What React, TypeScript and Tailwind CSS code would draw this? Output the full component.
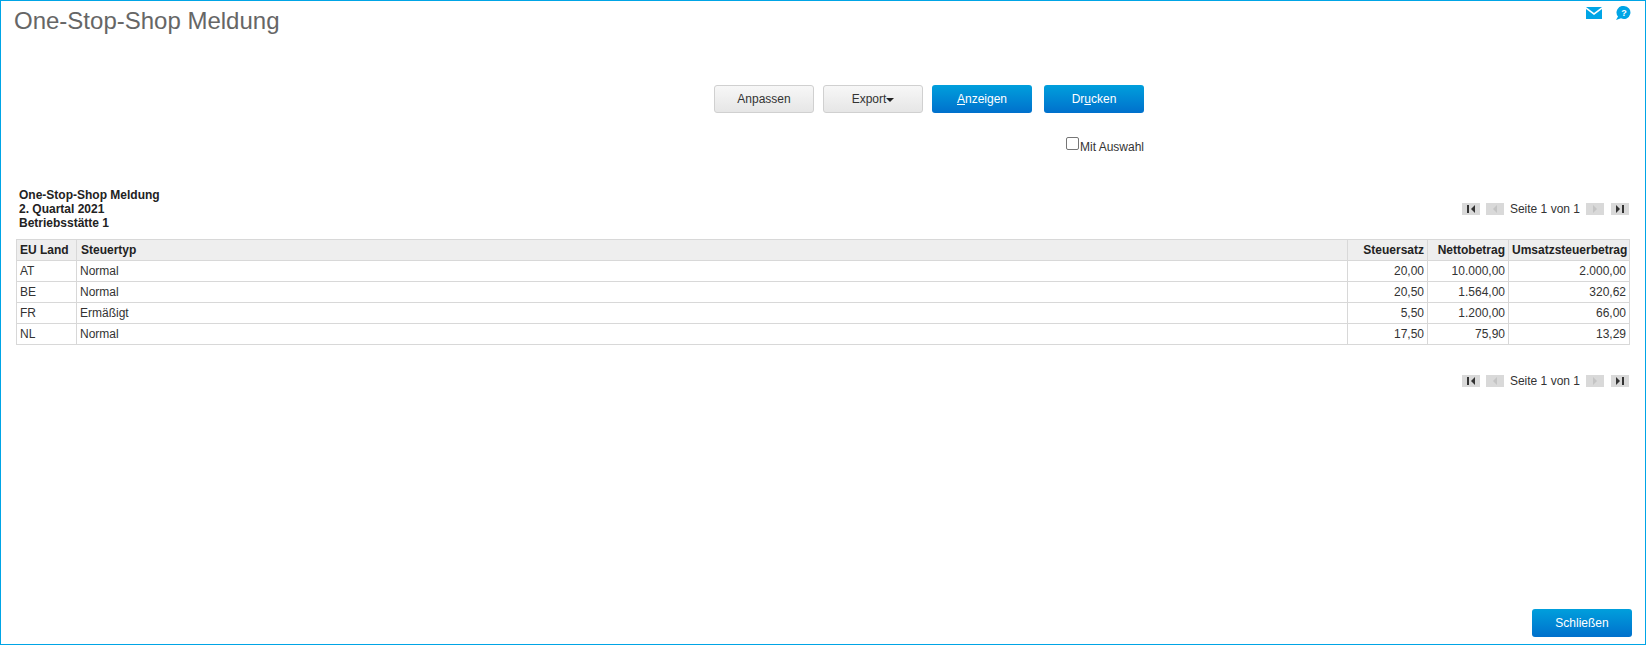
// One-Stop-Shop Meldung report page
const rows = [
  { land: 'AT', typ: 'Normal', satz: '20,00', netto: '10.000,00', ust: '2.000,00' },
  { land: 'BE', typ: 'Normal', satz: '20,50', netto: '1.564,00', ust: '320,62' },
  { land: 'FR', typ: 'Ermäßigt', satz: '5,50', netto: '1.200,00', ust: '66,00' },
  { land: 'NL', typ: 'Normal', satz: '17,50', netto: '75,90', ust: '13,29' },
];

function PagerButton({ kind }: { kind: 'first' | 'prev' | 'next' | 'last' }) {
  const off = kind === 'prev' || kind === 'next';
  const color = off ? '#c4c4c4' : '#333333';
  return (
    <span className="flex h-3 w-[18px] items-center justify-center bg-[#d9d9d9]">
      <svg width="10" height="8" viewBox="0 0 10 8">
        {kind === 'first' && <path d="M1 0h2v8H1zM9 0v8L5 4z" fill={color} />}
        {kind === 'prev' && <path d="M7 0v8L3 4z" fill={color} />}
        {kind === 'next' && <path d="M3 0v8l4-4z" fill={color} />}
        {kind === 'last' && <path d="M1 0v8l4-4zM7 0h2v8H7z" fill={color} />}
      </svg>
    </span>
  );
}

function Pager() {
  return (
    <div className="flex items-center text-xs text-[#333]">
      <PagerButton kind="first" />
      <span className="ml-1.5" />
      <PagerButton kind="prev" />
      <span className="mx-1.5 whitespace-nowrap">Seite 1 von 1</span>
      <PagerButton kind="next" />
      <span className="ml-[7px]" />
      <PagerButton kind="last" />
    </div>
  );
}

const grayBtn =
  'h-7 w-[100px] rounded-[3px] border border-[#d0d0d0] bg-gradient-to-b from-[#f7f7f7] to-[#e6e6e6] text-xs text-[#333]';
const blueBtn =
  'h-7 w-[100px] rounded-[3px] bg-gradient-to-b from-[#009fdc] to-[#0070cc] text-xs text-white';

export default function App() {
  return (
    <div className="relative flex h-[645px] w-[1646px] flex-col border border-[#00a5e6] bg-white font-['Liberation_Sans',Arial,sans-serif]">
      {/* Top right icons */}
      <div className="absolute right-[14px] top-[5px] flex items-start gap-[14px]">
        <svg width="16" height="12" viewBox="0 0 16 12" className="mt-px">
          <path d="M0 0h16L8 6z" fill="#00a5e6" />
          <path d="M0 2l8 6 8-6v10H0z" fill="#00a5e6" />
        </svg>
        <svg width="15" height="14" viewBox="0 0 15 14">
          <path d="M8 0a6.5 6.5 0 1 1-3 12.3L0 14l2-3.5A6.5 6.5 0 0 1 8 0z" fill="#00a5e6" />
          <text x="8" y="10" textAnchor="middle" fontSize="9" fontWeight="700" fill="#fff" fontFamily="Liberation Sans">
            ?
          </text>
        </svg>
      </div>

      <h1 className="ml-[13px] mt-1 text-2xl leading-[32px] text-[#666]">One-Stop-Shop Meldung</h1>

      {/* Action buttons */}
      <div className="mt-12 flex justify-end pr-[501px]">
        <button className={grayBtn}>Anpassen</button>
        <button className={`${grayBtn} ml-[9px]`}>
          Export<span className="inline-block border-x-[4px] border-t-[4px] border-x-transparent border-t-[#222] align-middle" />
        </button>
        <button className={`${blueBtn} ml-[9px]`}>
          <span className="underline">A</span>nzeigen
        </button>
        <button className={`${blueBtn} ml-3`}>
          Dr<span className="underline">u</span>cken
        </button>
      </div>

      <label className="mt-6 flex items-start justify-end pr-[501px] text-xs text-[#333]">
        <span className="mr-px h-[13px] w-[13px] rounded-[2px] border border-[#767676] bg-white" />
        <span className="mt-0.5">Mit Auswahl</span>
      </label>

      {/* Report header */}
      <div className="ml-[18px] mr-[16px] mt-[33px] flex items-center justify-between">
        <div className="text-xs font-bold leading-[14px] text-[#222]">
          <div>One-Stop-Shop Meldung</div>
          <div>2. Quartal 2021</div>
          <div>Betriebsstätte 1</div>
        </div>
        <Pager />
      </div>

      <table className="ml-[15px] mt-[9px] w-[1614px] table-fixed border-collapse text-xs text-[#333]">
        <colgroup>
          <col className="w-[60px]" />
          <col />
          <col className="w-[80px]" />
          <col className="w-[81px]" />
          <col className="w-[121px]" />
        </colgroup>
        <thead>
          <tr className="h-[21px] bg-[#eeeeee] font-bold text-[#222]">
            <th className="border border-[#d8d8d8] px-[3px] py-0 text-left">EU Land</th>
            <th className="border border-[#d8d8d8] py-0 pl-1 pr-[3px] text-left">Steuertyp</th>
            <th className="border border-[#d8d8d8] px-[3px] py-0 text-right">Steuersatz</th>
            <th className="border border-[#d8d8d8] px-[3px] py-0 text-right">Nettobetrag</th>
            <th className="border border-[#d8d8d8] px-[3px] py-0 text-right">Umsatzsteuerbetrag</th>
          </tr>
        </thead>
        <tbody>
          {rows.map((r) => (
            <tr key={r.land} className="h-[21px]">
              <td className="border border-[#d8d8d8] px-[3px] py-0">{r.land}</td>
              <td className="border border-[#d8d8d8] px-[3px] py-0">{r.typ}</td>
              <td className="border border-[#d8d8d8] px-[3px] py-0 text-right">{r.satz}</td>
              <td className="border border-[#d8d8d8] px-[3px] py-0 text-right">{r.netto}</td>
              <td className="border border-[#d8d8d8] px-[3px] py-0 text-right">{r.ust}</td>
            </tr>
          ))}
        </tbody>
      </table>

      <div className="mr-[16px] mt-7 flex justify-end">
        <Pager />
      </div>

      <div className="mt-auto flex justify-end pb-[7px] pr-[13px]">
        <button className={blueBtn}>Schließen</button>
      </div>
    </div>
  );
}
